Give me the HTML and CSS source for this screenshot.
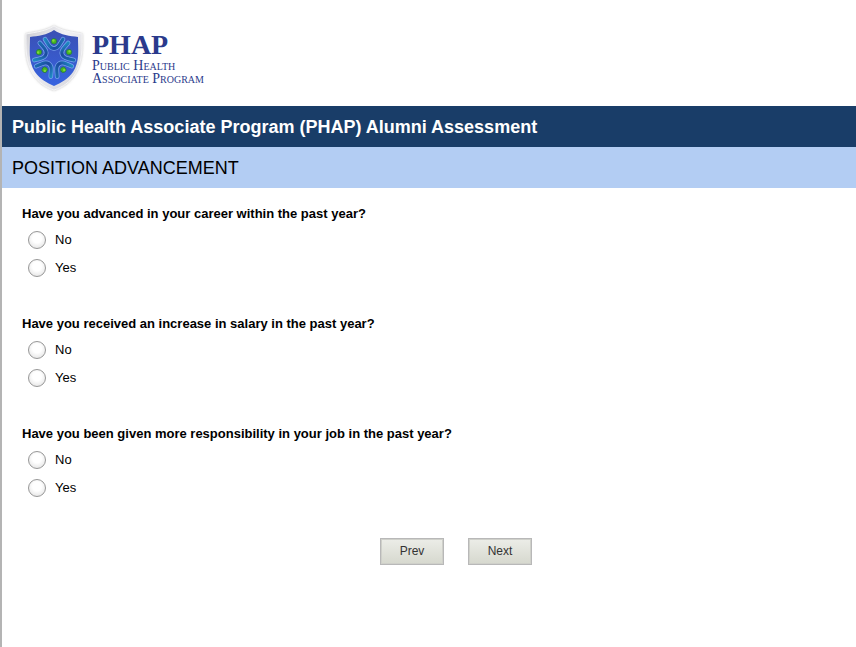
FILE: index.html
```html
<!DOCTYPE html>
<html lang="en">
<head>
<meta charset="utf-8">
<title>Public Health Associate Program (PHAP) Alumni Assessment</title>
<link rel="stylesheet" href="styles.css">
</head>
<body>
<header class="brand">
  <svg class="shield" viewBox="0 0 64 72" aria-hidden="true">
    <defs>
      <linearGradient id="rim" x1="0" y1="0" x2="1" y2="1">
        <stop offset="0" stop-color="#c9c9cf"/>
        <stop offset="0.4" stop-color="#f0f0f4"/>
        <stop offset="1" stop-color="#d4d4da"/>
      </linearGradient>
      <linearGradient id="field" x1="0" y1="0" x2="0" y2="1">
        <stop offset="0" stop-color="#3a50b4"/>
        <stop offset="1" stop-color="#3763e0"/>
      </linearGradient>
      <linearGradient id="limb" gradientUnits="userSpaceOnUse" x1="-10" y1="0" x2="10" y2="0">
        <stop offset="0" stop-color="#1f8ec4"/>
        <stop offset="0.5" stop-color="#1c4aa0"/>
        <stop offset="1" stop-color="#1a6cb0"/>
      </linearGradient>
      <filter id="shade" x="-20%" y="-20%" width="140%" height="140%">
        <feDropShadow dx="0" dy="0" stdDeviation="1" flood-color="#777" flood-opacity="0.5"/>
      </filter>
      <g id="person" fill="none" stroke-linecap="round">
        <path d="M-9-17.800L-6-13Q-3.500-8.500 0-8.500Q3.500-8.500 6-13L9-17.800" stroke="#7aa5ee" stroke-width="4.600"/>
        <path d="M-9-17.800L-6-13Q-3.500-8.500 0-8.500Q3.500-8.500 6-13L9-17.800" stroke="url(#limb)" stroke-width="3.200"/>
        <circle cy="-15.800" r="2.800" fill="#48b51f" stroke="#1c6a55" stroke-width="0.600"/>
        <circle cx="-0.600" cy="-16.500" r="1.200" fill="#82d83c"/>
      </g>
    </defs>
    <path d="M32 3C40 8 49 9 60 11C60 24 61 38 53 51C48 59 41 64 32 67C23 64 16 59 11 51C3 38 4 24 4 11C15 9 24 8 32 3Z" fill="url(#rim)" stroke="#f4f4f6" stroke-width="1" filter="url(#shade)"/>
    <path d="M32 7C39 12 48 13 56 14C56 28 58 38 51 49C46 56 39 60 32 63C25 60 18 56 13 49C6 38 8 28 8 14C16 13 25 12 32 7Z" fill="url(#field)"/>
    <g transform="translate(32 34)">
      <use href="#person" transform="rotate(144)"/>
      <use href="#person" transform="rotate(216)"/>
      <use href="#person" transform="rotate(72)"/>
      <use href="#person" transform="rotate(288)"/>
      <use href="#person"/>
    </g>
  </svg>
  <div class="brand-text">
    <div class="brand-name">PHAP</div>
    <div class="brand-line">Public Health<br>Associate Program</div>
  </div>
</header>
<main>
  <h1 class="title">Public Health Associate Program (PHAP) Alumni Assessment</h1>
  <h2 class="section">POSITION ADVANCEMENT</h2>
  <form class="survey">
    <fieldset class="question">
      <legend>Have you advanced in your career within the past year?</legend>
      <label class="option"><input type="radio" name="career" value="no">No</label>
      <label class="option"><input type="radio" name="career" value="yes">Yes</label>
    </fieldset>
    <fieldset class="question">
      <legend>Have you received an increase in salary in the past year?</legend>
      <label class="option"><input type="radio" name="salary" value="no">No</label>
      <label class="option"><input type="radio" name="salary" value="yes">Yes</label>
    </fieldset>
    <fieldset class="question">
      <legend>Have you been given more responsibility in your job in the past year?</legend>
      <label class="option"><input type="radio" name="responsibility" value="no">No</label>
      <label class="option"><input type="radio" name="responsibility" value="yes">Yes</label>
    </fieldset>
    <div class="actions">
      <button type="button">Prev</button>
      <button type="button">Next</button>
    </div>
  </form>
</main>
</body>
</html>
```
FILE: styles.css
```css
* {
  box-sizing: border-box;
}

body {
  margin: 0;
  min-height: 100vh;
  border-left: 2px solid #b4b4b4;
  background: #fff;
  color: #000;
  font-family: "Liberation Sans", Arial, sans-serif;
  font-size: 13px;
}

.brand {
  display: flex;
  gap: 6px;
  padding: 23px 20px 11px;
}

.shield {
  width: 64px;
  height: 72px;
}

.brand-text {
  padding-top: 8px;
  color: #2a3a8c;
  font-family: "Liberation Serif", "Times New Roman", serif;
}

.brand-name {
  font-size: 28px;
  font-weight: bold;
  line-height: 28px;
}

.brand-line {
  font-size: 14px;
  font-variant: small-caps;
  line-height: 13px;
}

.title,
.section {
  margin: 0;
  padding: 1px 10px 0;
  font-size: 18px;
  line-height: 40px;
}

.title {
  background: #193d68;
  color: #fff;
}

.section {
  background: #b3cdf3;
  font-weight: normal;
}

.survey {
  padding: 18px 20px;
}

.question {
  margin: 0 0 35px;
  padding: 0;
  border: 0;
}

.question legend {
  padding: 0 0 3px;
  font-weight: bold;
  line-height: 16px;
}

.option {
  display: flex;
  align-items: center;
  gap: 9px;
  height: 28px;
  padding-left: 6px;
}

.option input {
  appearance: none;
  width: 18px;
  height: 18px;
  margin: 2px 0 0;
  border: 1px solid #979797;
  border-radius: 50%;
  background: radial-gradient(circle at 50% 40%, #fff 35%, #dcdcdc);
}

.actions {
  display: flex;
  justify-content: center;
  gap: 24px;
  padding: 2px 0 0 54px;
}

.actions button {
  width: 64px;
  height: 27px;
  padding: 0 0 2px;
  border: 1px solid #b8b8b8;
  background: linear-gradient(#ecede8, #d6d8ce);
  box-shadow: inset 0 0 0 1px #cfd0ca;
  color: #333;
  font-family: inherit;
  font-size: 12px;
}
```
